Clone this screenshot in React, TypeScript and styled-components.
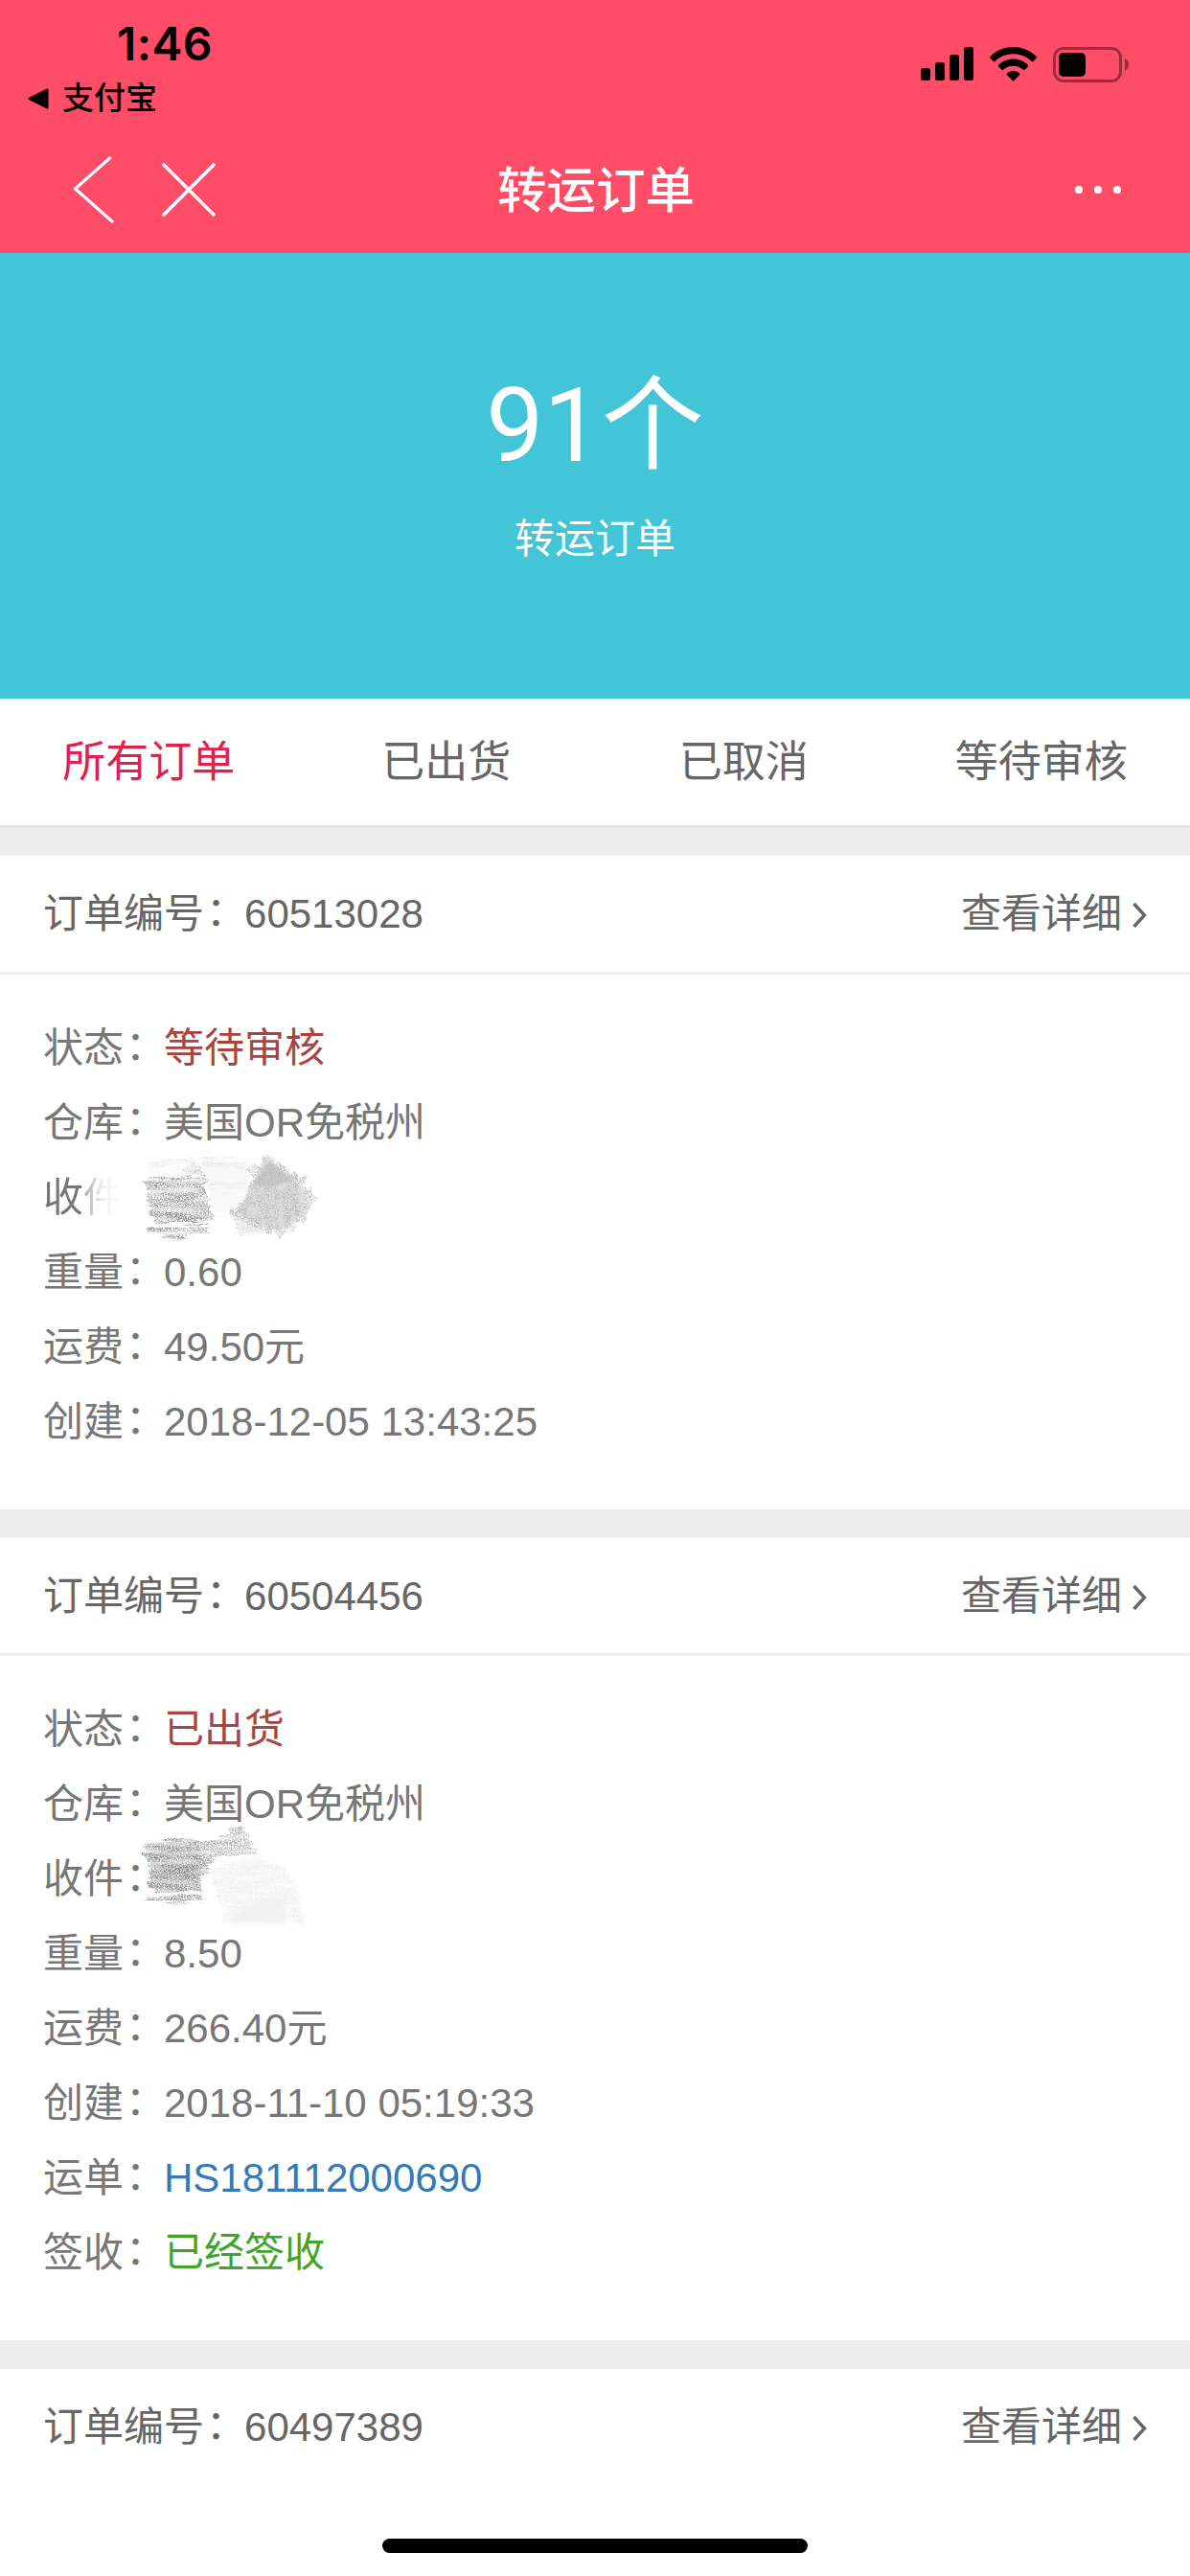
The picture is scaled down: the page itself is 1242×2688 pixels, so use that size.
import React from 'react';
import styled, { createGlobalStyle } from 'styled-components';

const GlobalStyle = createGlobalStyle`
  * { box-sizing: border-box; }
  body {
    margin: 0;
    background: #fff;
    font-family: "Liberation Sans", "Noto Sans CJK SC", sans-serif;
  }
`;

const Page = styled.div`
  width: 1242px;
  height: 2688px;
  display: flex;
  flex-direction: column;
  background: #fff;
  overflow: hidden;
`;

const Top = styled.header`
  height: 264px;
  flex: none;
  background: #ff4d67;
  display: flex;
  flex-direction: column;
`;

const StatusBar = styled.div`
  height: 132px;
  display: flex;
  justify-content: space-between;
  padding: 18px 63px 0 29px;
`;

const StatusLeft = styled.div`
  display: flex;
  flex-direction: column;
`;

const Clock = styled.div`
  font: 600 48px/56px Inter, sans-serif;
  letter-spacing: 0.4px;
  padding-left: 93px;
  color: #000;
`;

const BackApp = styled.div`
  display: flex;
  align-items: center;
  gap: 14px;
  font-size: 33px;
  line-height: 58px;
  font-weight: 500;
  color: #000;
`;

const StatusIcons = styled.div`
  display: flex;
  align-items: flex-start;
  gap: 17px;
  padding-top: 31px;
`;

const NavBar = styled.nav`
  height: 132px;
  display: grid;
  grid-template-columns: 1fr auto 1fr;
  align-items: center;
  padding: 0 74px 0 76px;
`;

const NavLeft = styled.div`
  display: flex;
  align-items: center;
  gap: 50px;
`;

const NavRight = styled.div`
  display: flex;
  justify-content: flex-end;
  gap: 12px;
  margin-right: -2px;
`;

const NavTitle = styled.h1`
  margin: 0;
  padding-top: 2px;
  font-size: 51.5px;
  font-weight: 500;
  line-height: 60px;
  color: #fff;
`;

const Dot = styled.i`
  width: 8px;
  height: 8px;
  border-radius: 50%;
  background: #fff;
`;

const Banner = styled.section`
  height: 465px;
  flex: none;
  background: #42c5d6;
  color: #fff;
  display: flex;
  flex-direction: column;
  align-items: center;
  padding-top: 121px;
`;

const Count = styled.div`
  font-family: Roboto, "Noto Sans CJK SC", sans-serif;
  font-size: 107px;
  line-height: 120px;
`;

const CountLabel = styled.div`
  font-size: 42px;
  line-height: 60px;
  margin-top: 28px;
`;

const Tabs = styled.div`
  height: 135px;
  flex: none;
  display: grid;
  grid-template-columns: repeat(4, 1fr);
  border-bottom: 3px solid #e3e3e3;
`;

const Tab = styled.button<{ $active?: boolean }>`
  border: 0;
  padding: 2px 0 0;
  background: none;
  font: inherit;
  font-size: 45px;
  line-height: 130px;
  color: ${(p) => (p.$active ? '#e0214d' : '#666')};
`;

const Orders = styled.main`
  flex: 1;
  display: flex;
  flex-direction: column;
  gap: 30px;
  padding-top: 29px;
  background: #eee;
`;

const Card = styled.article<{ $fill?: boolean }>`
  background: #fff;
  flex: ${(p) => (p.$fill ? '1' : 'none')};
`;

const CardHead = styled.div<{ $line: boolean; $height: number }>`
  height: ${(p) => p.$height}px;
  display: flex;
  justify-content: space-between;
  align-items: flex-start;
  padding: 0 45px;
  font-size: 42px;
  line-height: 121px;
  color: #666;
  border-bottom: ${(p) => (p.$line ? '3px solid #eee' : '0')};
`;

const Detail = styled.a`
  display: flex;
  align-items: center;
  gap: 11px;

  svg {
    margin-top: 3px;
  }
`;

const CardBody = styled.div`
  padding: 38px 45px 52px;
`;

const Row = styled.div`
  position: relative;
  height: 78px;
  line-height: 78px;
  font-size: 42px;
  color: #777;
  display: flex;
`;

const Label = styled.span<{ $faded?: boolean }>`
  width: 126px;
  flex: none;
  white-space: nowrap;
  ${(p) =>
    p.$faded &&
    `-webkit-mask-image: linear-gradient(90deg, #000 40px, rgba(0,0,0,.5) 46px, rgba(0,0,0,.12) 62px, transparent 84px);
     mask-image: linear-gradient(90deg, #000 40px, rgba(0,0,0,.5) 46px, rgba(0,0,0,.12) 62px, transparent 84px);`}
`;

const Colon = styled.span`
  display: inline-block;
  line-height: 1;
  vertical-align: 2px;
  margin: 0 -2px 0 2px;
`;

const Value = styled.span<{ $color?: string }>`
  color: ${(p) => p.$color ?? 'inherit'};
  white-space: nowrap;
`;

const Smudge = styled.svg<{ $top: number }>`
  position: absolute;
  left: 95px;
  top: ${(p) => p.$top}px;
`;

const HomeIndicator = styled.div`
  position: fixed;
  left: 399px;
  top: 2649px;
  width: 444px;
  height: 15px;
  border-radius: 8px;
  background: #000;
`;

const Signal = () => (
  <svg width="55" height="36" viewBox="0 0 55 36">
    <rect x="0" y="22" width="10" height="13" rx="2.5" />
    <rect x="15" y="16" width="10" height="19" rx="2.5" />
    <rect x="30" y="8" width="10" height="27" rx="2.5" />
    <rect x="45" y="0" width="10" height="35" rx="2.5" />
  </svg>
);

const Wifi = () => (
  <svg width="49" height="36" viewBox="0 0 49 36">
    <path d="M24.5 0C34 0 42.500 3.800 48.600 10a1.200 1.200 0 0 1 0 1.700L45.300 15a1.200 1.200 0 0 1-1.700 0A27 27 0 0 0 24.500 7.200 27 27 0 0 0 5.400 15a1.200 1.200 0 0 1-1.700 0L.4 11.700a1.200 1.200 0 0 1 0-1.700C6.500 3.800 15 0 24.500 0Z" />
    <path d="M24.500 12.500c6 0 11.400 2.400 15.300 6.200a1.200 1.200 0 0 1 0 1.700L36.500 23.800a1.200 1.200 0 0 1-1.700 0 14.800 14.800 0 0 0-20.600 0 1.200 1.200 0 0 1-1.700 0L9.200 20.400a1.200 1.200 0 0 1 0-1.700c3.900-3.800 9.300-6.200 15.300-6.200Z" />
    <path d="M24.500 25c2.500 0 4.800.9 6.500 2.500a1.200 1.200 0 0 1 0 1.700l-5.600 5.900a1.200 1.200 0 0 1-1.800 0L18 29.200a1.200 1.200 0 0 1 0-1.700C19.700 25.900 22 25 24.500 25Z" />
  </svg>
);

const Battery = () => (
  <svg width="80" height="37" viewBox="0 0 80 37">
    <rect x="1.500" y="1.500" width="69" height="34" rx="9.500" fill="none" stroke="#000" strokeOpacity=".4" strokeWidth="3" />
    <rect x="6" y="6" width="28" height="25" rx="5" />
    <path d="M75 12c2.500 1 4 3.500 4 6.500s-1.500 5.500-4 6.500Z" fillOpacity=".4" />
  </svg>
);

const BackTriangle = () => (
  <svg width="22" height="22" viewBox="0 0 22 22">
    <path d="M1 10 20 .6q1.500-.5 1.500 1v18.800q0 1.500-1.500 1L1 12q-1.200-1 0-2Z" />
  </svg>
);

const BackIcon = () => (
  <svg width="43" height="70" viewBox="0 0 43 70" fill="none" stroke="#fff" strokeWidth="3.200" strokeLinecap="round" strokeLinejoin="round">
    <path d="M38.500 2 2.500 34 41 68" />
  </svg>
);

const CloseIcon = () => (
  <svg width="56" height="56" viewBox="0 0 56 56" fill="none" stroke="#fff" strokeWidth="3.600" strokeLinecap="round">
    <path d="M2 2 54 54M54 2 2 54" />
  </svg>
);

const Chevron = () => (
  <svg width="15" height="28" viewBox="0 0 15 28" fill="none" stroke="#666" strokeWidth="3.400">
    <path d="M1.500 2 12.500 14 1.500 26" />
  </svg>
);

// Pencil texture: ragged edges from coarse noise, speckle from fine noise.
const Pencil = ({ id, streak }: { id: string; streak: string }) => (
  <filter id={id} x="-10%" y="-10%" width="120%" height="120%">
    <feTurbulence type="fractalNoise" baseFrequency={streak} numOctaves={2} seed={4} result="coarse" />
    <feTurbulence type="fractalNoise" baseFrequency="0.7" numOctaves={2} seed={11} result="fine" />
    <feColorMatrix in="coarse" type="matrix" values="0 0 0 0 0  0 0 0 0 0  0 0 0 0 0  1.8 0 0 0 -0.15" result="streaks" />
    <feColorMatrix in="fine" type="matrix" values="0 0 0 0 0  0 0 0 0 0  0 0 0 0 0  0 4 0 0 -1.4" result="speckle" />
    <feDisplacementMap in="SourceGraphic" in2="coarse" scale={16} xChannelSelector="R" yChannelSelector="B" result="ragged" />
    <feComposite in="ragged" in2="speckle" operator="in" result="grained" />
    <feComposite in="grained" in2="streaks" operator="in" />
  </filter>
);

const SmudgeA = () => (
  <Smudge $top={-11} width="200" height="104" viewBox="0 0 200 104">
    <defs>
      <Pencil id="a1" streak="0.03 0.2" />
      <Pencil id="a2" streak="0.14 0.07" />
      <filter id="a3"><feGaussianBlur stdDeviation="1.500" /></filter>
    </defs>
    <g filter="url(#a3)">
      <path d="M12 12 62 10 70 26 14 24Z" fill="#fbfbfb" />
      <path d="M68 8 118 12 120 40 104 66 82 64 76 30Z" fill="#f8f8f8" />
      <path d="M104 70 128 68 134 88 110 90Z" fill="#f6f6f6" />
    </g>
    <g filter="url(#a1)">
      <path d="M10 29 76 28 76 50 82 68 80 76 22 76 16 60Z" fill="#a2a2a2" />
      <path d="M10 29 50 29 48 35 14 36Z" fill="#8a8a8a" />
      <path d="M36 65 82 70 78 76 30 75Z" fill="#848484" />
      <path d="M16 81 78 80 76 86 32 90 16 87Z" fill="#989898" />
      <path d="M48 26 58 14 70 14 76 27Z" fill="#cfcfcf" />
      <path d="M14 10 60 8 70 14 20 16ZM70 8 116 12 114 18 74 14Z" fill="#e8e8e8" />
      <path d="M80 30 118 34 112 44 82 40Z" fill="#eaeaea" />
      <path d="M104 68 134 66 130 88 106 86Z" fill="#dcdcdc" />
    </g>
    <path d="M141 10 156 24 174 38 180 52 170 74 150 84 130 78 108 66 126 30Z" fill="#dcdcdc" fillOpacity=".8" filter="url(#a3)" />
    <g filter="url(#a2)">
      <path d="M141 5 160 22 182 28 176 34 190 48 186 56 178 76 164 82 152 94 138 84 118 80 103 66 116 44 124 30 116 15 132 17Z" fill="#bdbdbd" />
    </g>
    <path d="M141 12 154 22 170 30 158 33 146 39 126 36 122 41 130 26Z" fill="#bababa" fillOpacity=".6" filter="url(#a3)" />
  </Smudge>
);

const SmudgeB = () => (
  <Smudge $top={-21} width="200" height="116" viewBox="0 0 200 116">
    <defs>
      <Pencil id="b1" streak="0.03 0.2" />
      <filter id="b2"><feGaussianBlur stdDeviation="2.500" /></filter>
    </defs>
    <g filter="url(#b2)">
      <path d="M14 24 68 25 71 48 66 72 20 72Z" fill="#d8d8d8" fillOpacity=".55" />
      <path d="M80 50 130 34 158 52 170 76 178 104 100 106 94 84Z" fill="#fcfcfc" />
      <path d="M126 84 156 82 158 106 98 106Z" fill="#f3f3f3" />
    </g>
    <g filter="url(#b1)">
      <path d="M8 18 72 20 76 36 80 48 70 56 70 72 22 73 14 64 18 50 10 38Z" fill="#929292" />
      <path d="M28 44 68 38 66 66 30 66Z" fill="#848484" />
      <path d="M12 78 72 77 72 82 34 85 14 83Z" fill="#989898" />
      <path d="M68 21 116 4 120 20 130 33 96 36 76 46Z" fill="#b0b0b0" />
      <path d="M78 50 118 36 140 42 160 50 172 74 178 104 92 106 88 82Z" fill="#efefef" />
    </g>
  </Smudge>
);

type Field = { label: string; value?: string; color?: string; faded?: boolean; smudge?: 'a' | 'b' };
type Order = { no: string; headHeight: number; fields: Field[] };

const orders: Order[] = [
  {
    no: '60513028',
    headHeight: 124,
    fields: [
      { label: '状态', value: '等待审核', color: '#a94442' },
      { label: '仓库', value: '美国OR免税州' },
      { label: '收件', faded: true, smudge: 'a' },
      { label: '重量', value: '0.60' },
      { label: '运费', value: '49.50元' },
      { label: '创建', value: '2018-12-05 13:43:25' },
    ],
  },
  {
    no: '60504456',
    headHeight: 123,
    fields: [
      { label: '状态', value: '已出货', color: '#a94442' },
      { label: '仓库', value: '美国OR免税州' },
      { label: '收件', smudge: 'b' },
      { label: '重量', value: '8.50' },
      { label: '运费', value: '266.40元' },
      { label: '创建', value: '2018-11-10 05:19:33' },
      { label: '运单', value: 'HS181112000690', color: '#337ab7' },
      { label: '签收', value: '已经签收', color: '#3fa526' },
    ],
  },
  { no: '60497389', headHeight: 120, fields: [] },
];

export default function App() {
  return (
    <Page>
      <GlobalStyle />
      <Top>
        <StatusBar>
          <StatusLeft>
            <Clock>1:46</Clock>
            <BackApp>
              <BackTriangle />
              支付宝
            </BackApp>
          </StatusLeft>
          <StatusIcons>
            <Signal />
            <Wifi />
            <Battery />
          </StatusIcons>
        </StatusBar>
        <NavBar>
          <NavLeft>
            <BackIcon />
            <CloseIcon />
          </NavLeft>
          <NavTitle>转运订单</NavTitle>
          <NavRight>
            <Dot />
            <Dot />
            <Dot />
          </NavRight>
        </NavBar>
      </Top>
      <Banner>
        <Count>91个</Count>
        <CountLabel>转运订单</CountLabel>
      </Banner>
      <Tabs>
        <Tab $active>所有订单</Tab>
        <Tab>已出货</Tab>
        <Tab>已取消</Tab>
        <Tab>等待审核</Tab>
      </Tabs>
      <Orders>
        {orders.map((o) => (
          <Card key={o.no} $fill={o.fields.length === 0}>
            <CardHead $line={o.fields.length > 0} $height={o.headHeight}>
              <span>
                订单编号<Colon>：</Colon>
                {o.no}
              </span>
              <Detail>
                查看详细
                <Chevron />
              </Detail>
            </CardHead>
            {o.fields.length > 0 && (
              <CardBody>
                {o.fields.map((f) => (
                  <Row key={f.label}>
                    <Label $faded={f.faded}>
                      {f.label}
                      {!f.faded && <Colon>：</Colon>}
                    </Label>
                    {f.value && <Value $color={f.color}>{f.value}</Value>}
                    {f.smudge === 'a' && <SmudgeA />}
                    {f.smudge === 'b' && <SmudgeB />}
                  </Row>
                ))}
              </CardBody>
            )}
          </Card>
        ))}
      </Orders>
      <HomeIndicator />
    </Page>
  );
}
